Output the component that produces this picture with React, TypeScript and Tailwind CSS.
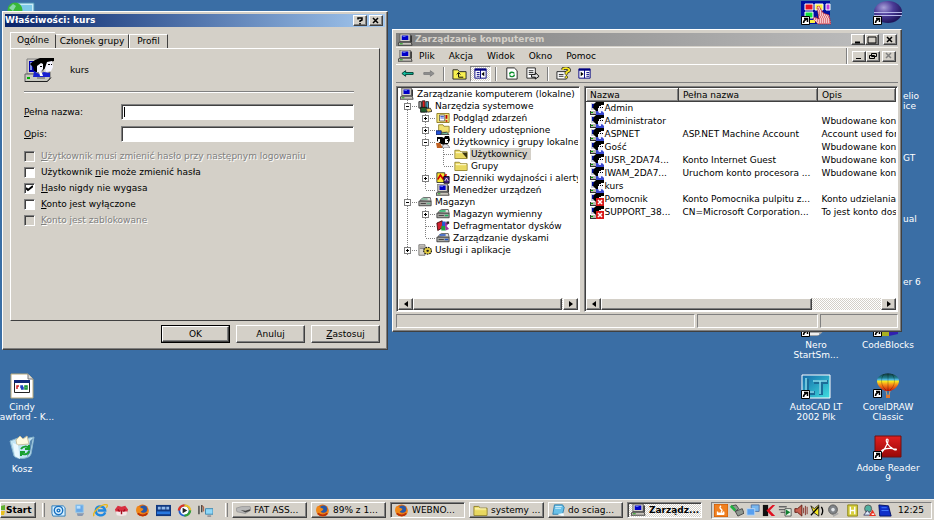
import type { ReactNode } from "react";

const raised =
  "bg-[#d4d0c8] border border-t-white border-l-white border-r-[#404040] border-b-[#404040] shadow-[inset_-1px_-1px_0_#808080]";
const sunken =
  "border border-t-[#808080] border-l-[#808080] border-r-white border-b-white shadow-[inset_1px_1px_0_#404040]";
const thinSunken = "border border-t-[#808080] border-l-[#808080] border-r-white border-b-white";
const dither = "bg-[repeating-conic-gradient(#ffffff_0_25%,#d4d0c8_0_50%)] bg-[length:2px_2px]";

function Svg({ w, h, box, children }: { w: number; h: number; box?: string; children: ReactNode }) {
  return (
    <svg
      width={w}
      height={h}
      viewBox={box ?? `0 0 ${w} ${h}`}
      preserveAspectRatio="none"
      className="block shrink-0"
      aria-hidden="true"
    >
      {children}
    </svg>
  );
}

/* ---------- small icons, all drawn on a 16x16 grid ---------- */

function Computer({ w = 15, h = 12 }: { w?: number; h?: number }) {
  return (
    <Svg w={w} h={h} box="0 0 16 16">
      <path d="M2 0h11v10H2z" fill="#d4d0c8" stroke="#555" />
      <path d="M4 2h7v6H4z" fill="#0000c8" />
      <path d="M5 3h3v1H5z" fill="#7090ff" />
      <path d="M1 11h13l1 4H0z" fill="#c8c4bc" stroke="#333" />
      <path d="M2 13h3" stroke="#00a000" />
      <path d="M14 2v9" stroke="#222" strokeWidth="1.5" />
    </Svg>
  );
}

function User({ blocked }: { blocked?: boolean }) {
  return (
    <Svg w={14} h={13} box="0 0 14 13">
      <path d="M1 1h6v7H1z" fill="#c8c8d8" />
      <path d="M2 2h3v4H2z" fill="#0010a0" />
      <path d="M0 9h9v3H0z" fill="#b8b8b0" />
      <path d="M0 12h10v1H0zM0 9h1v3H0z" fill="#303030" />
      <path d="M1 10h2v1H1z" fill="#00a000" />
      <path d="M4 2l2-2h8v3h-3v3L9 9H6L3 6z" fill="#000" />
      <path d="M9 4h4v4l-2 1H8V6h1z" fill="#f4f4ff" />
      <path d="M10 5h1v1h-1zM12 5h1v1h-1z" fill="#000" />
      <path d="M6 9h2l2 1 2-1 2 2v2H6z" fill="#3848d0" />
      <path d="M8 9h3v2H9z" fill="#e8e8ff" />
      {blocked && (
        <>
          <path d="M6 5h8v8H6z" fill="#d81818" />
          <path d="M8 7l4 4M12 7l-4 4" stroke="#fff" strokeWidth="1.5" />
        </>
      )}
    </Svg>
  );
}

function UserLarge() {
  return (
    <Svg w={30} h={24}>
      <path d="M3 1h16v15H3z" fill="#d4d0c8" stroke="#808080" />
      <path d="M5 3h12v11H5z" fill="#0000b0" />
      <path d="M6 4h2v8H6z" fill="#8090e0" />
      <path d="M1 16h22l3-2v7l-3 3H1z" fill="#c8c8c0" stroke="#606060" />
      <path d="M1 23.500h22l4-4" stroke="#202020" fill="none" />
      <path d="M3 19h3v2H3z" fill="#00b000" />
      <path d="M13 20h8" stroke="#606060" />
      <path d="M6 6l5-4 5-2h14v3l-4 1-2 4-5 4-4 3-5-2-1-4z" fill="#000" />
      <path d="M13 8l4-3 2 1v5l-3 4-3-1z" fill="#f4f4ff" />
      <path d="M23 4l5-1 1 6-2 4-5 1-1-4z" fill="#f4f4ff" />
      <path d="M24 6h2v1h-2zM27 6h1v1h-1zM16 8h2v1h-2z" fill="#000" />
      <path d="M10 13l5 3 5-2 6 1v4H9z" fill="#1820d0" />
      <path d="M15 14l3 1 1 3h-3z" fill="#fff" />
    </Svg>
  );
}

function Folder({ open, w = 14, h = 12 }: { open?: boolean; w?: number; h?: number }) {
  return (
    <Svg w={w} h={h} box="0 0 16 16">
      <path d="M1 3h5l2 2h7v9H1z" fill="#f0e070" stroke="#8a7a20" />
      <path d="M2 6h12" stroke="#fffbd0" />
      <path d="M2 8h12v5H2z" fill="#e8d860" />
      {open && <path d="M9 6h6v8z" fill="#3a3410" />}
    </Svg>
  );
}

function Tools() {
  return (
    <Svg w={14} h={13} box="0 0 16 16">
      <path d="M1 2h3v8H1z" fill="#a0a0a0" stroke="#222" />
      <path d="M5 1h3v9H5z" fill="#e02020" stroke="#222" />
      <path d="M9 2h3v8H9z" fill="#40a0c0" stroke="#222" />
      <path d="M3 9h7v6H3z" fill="#206030" stroke="#111" />
      <path d="M9 11l5-1 2 4-5 1z" fill="#e8c850" stroke="#333" />
    </Svg>
  );
}

function EventLog() {
  return (
    <Svg w={14} h={12} box="0 0 16 16">
      <path d="M1 2h14v12H1z" fill="#f6e878" stroke="#806c10" />
      <path d="M4 4h6v8H4z" fill="#fff" stroke="#555" />
      <path d="M5 6h4M5 8h4" stroke="#2040c0" />
      <path d="M12 4v5M12 11v2" stroke="#c00000" strokeWidth="2" />
    </Svg>
  );
}

function SharedFolder() {
  return (
    <Svg w={14} h={12} box="0 0 16 16">
      <path d="M3 1h5l1 2h6v8H3z" fill="#f0e070" stroke="#8a7a20" />
      <path d="M0 9h6v5H0z" fill="#2050d8" stroke="#102060" />
      <path d="M6 12l6-1 3 3H6z" fill="#70c0a0" stroke="#333" />
    </Svg>
  );
}

function UserGroup() {
  return (
    <Svg w={14} h={12} box="0 0 14 12">
      <path d="M1 1h5l2 1 1-2h4l1 4-2 4-4 1-3-1-4-3z" fill="#000" />
      <path d="M2 3h2v3H2zM9 3h3v4H9z" fill="#f8f8f8" />
      <path d="M11 4h1v1h-1z" fill="#000" />
      <path d="M0 7h4l3 5H1z" fill="#c06020" />
      <path d="M7 9l2-1 3 1 2 3H6z" fill="#e0e0e8" stroke="#333" strokeWidth=".5" />
    </Svg>
  );
}

function PerfLog() {
  return (
    <Svg w={14} h={12} box="0 0 16 16">
      <path d="M1 1h9v13H1z" fill="#f8e830" stroke="#222" />
      <path d="M2 10l3-6 3 5 4-6" stroke="#d00000" strokeWidth="2" fill="none" />
      <path d="M9 6h6v9H9z" fill="#402080" stroke="#000" />
      <path d="M10 12l2-4 2 4" stroke="#fff" fill="none" />
    </Svg>
  );
}

function Drive({ accent }: { accent: string }) {
  return (
    <Svg w={14} h={12} box="0 0 16 16">
      <path d="M2 6l4-4h8l1 5z" fill="#e0e0dc" stroke="#555" />
      <path d="M1 7h14v6H1z" fill="#a8a8a4" stroke="#333" />
      <path d="M3 10h6" stroke="#333" />
      <path d="M10 9h4v2h-4z" fill={accent} />
      <path d="M4 3h7v2H4z" fill={accent} />
    </Svg>
  );
}

function Defrag() {
  return (
    <Svg w={14} h={12} box="0 0 16 16">
      <path d="M1 4l6-3 1 9-6 4z" fill="#d02030" stroke="#300" />
      <path d="M7 2h4v6H7z" fill="#2060d0" />
      <path d="M6 8h5v6H6z" fill="#20a040" />
      <path d="M10 3l5 1-3 4 3 4-4 2z" fill="#a030a0" />
      <path d="M12 2h3v3h-3z" fill="#222" />
    </Svg>
  );
}

function Services() {
  return (
    <Svg w={14} h={12} box="0 0 16 16">
      <path d="M1 1h7v14H1z" fill="#d8d4cc" stroke="#666" />
      <path d="M2 4h5M2 6h5" stroke="#777" />
      <circle cx="11" cy="9" r="4.500" fill="#e8d040" stroke="#222" strokeDasharray="2 1" strokeWidth="1.500" />
      <circle cx="11" cy="9" r="1.500" fill="#222" />
    </Svg>
  );
}

/* ---------- desktop pictures ---------- */

function Shortcut() {
  return (
    <>
      <path d="M.5 16.500h8v8h-8z" fill="#fff" stroke="#000" />
      <path d="M2.500 23c0-2 1-3 3-4M3 18.500h3.500V22" stroke="#000" fill="none" strokeWidth="1.500" />
    </>
  );
}

const NetworkPc = (
  <Svg w={28} h={24}>
    <path d="M10 1h17v17H10z" fill="#c8ecf8" stroke="#4a90b0" />
    <path d="M12 3h13v12H12z" fill="#7cc8e8" />
    <circle cx="8" cy="8" r="7.500" fill="#38b838" />
    <path d="M2 6l4-4 3 2-3 5z" fill="#88d8a8" />
  </Svg>
);

const ColorBlocks = (
  <Svg w={30} h={25}>
    <path d="M0 1h29v23H0z" fill="#0010a0" />
    <path d="M4 4h8v6H4z" fill="#e81020" stroke="#fff" />
    <path d="M14 4h8v6h-8z" fill="#f8f040" stroke="#fff" />
    <path d="M25 4h4v6h-4z" fill="#c040e0" stroke="#fff" />
    <path d="M4 12h8v6H4z" fill="#10e040" stroke="#fff" />
    <path d="M9 20h5v3H9z" fill="#f8f040" />
    <path d="M16 7l2-1 4 7 6 2 2 9H17l-5-5 1-2 5 2z" fill="#f4c8cc" stroke="#c01020" strokeDasharray="1 1" />
    <path
      d="M17 9h3M18 11h3M18 13h5M18 15h9M15 17h13M14 19h15M16 21h13M18 23h11"
      stroke="#c82838"
      strokeDasharray="1 1"
    />
    <Shortcut />
  </Svg>
);

const Eclipse = (
  <Svg w={30} h={25}>
    <defs>
      <radialGradient id="ecl" cx="35%" cy="30%" r="70%">
        <stop offset="0" stopColor="#a8a0d8" />
        <stop offset=".5" stopColor="#4c3c98" />
        <stop offset="1" stopColor="#20165c" />
      </radialGradient>
    </defs>
    <ellipse cx="15" cy="12" rx="14" ry="11" fill="url(#ecl)" />
    <path d="M1 12.500h28M1 15.500h28" stroke="#b8b8e8" />
    <Shortcut />
  </Svg>
);

const Nero = (
  <Svg w={30} h={25}>
    <path d="M6 12h18c0 6-4 11-8 12H6z" fill="#a0a4a8" />
    <path d="M9 22h9" stroke="#eee" strokeWidth="2" />
    <Shortcut />
  </Svg>
);

const CodeBlocks = (
  <Svg w={30} h={25}>
    <path d="M8 10h8v14H8z" fill="#a8b020" />
    <path d="M16 10h9v12l-9 2z" fill="#3020b0" />
    <Shortcut />
  </Svg>
);

const AutoCad = (
  <Svg w={30} h={25}>
    <defs>
      <linearGradient id="acad" x1="0" x2="1" y2="1">
        <stop offset="0" stopColor="#1468a8" />
        <stop offset="1" stopColor="#40e0e0" />
      </linearGradient>
    </defs>
    <path d="M1 1h28v23H1z" fill="url(#acad)" stroke="#fff" />
    <path d="M6 5v14h8M13 8h14M20 8v13" stroke="#1c6c98" strokeWidth="4" fill="none" />
    <path d="M5 4v14h8M12 7h14M19 7v13" stroke="#88e0f0" strokeWidth="1.500" fill="none" />
    <Shortcut />
  </Svg>
);

const Corel = (
  <Svg w={30} h={26}>
    <defs>
      <linearGradient id="balloon" x1="0" x2="0" y2="1">
        <stop offset="0" stopColor="#103838" />
        <stop offset=".25" stopColor="#208090" />
        <stop offset=".35" stopColor="#50b8e0" />
        <stop offset=".45" stopColor="#f8e820" />
        <stop offset=".65" stopColor="#f88818" />
        <stop offset="1" stopColor="#c81808" />
      </linearGradient>
    </defs>
    <path d="M4 8C4-2 26-2 26 8c0 5-5 9-9 10h-4C9 17 4 13 4 8z" fill="url(#balloon)" />
    <path d="M11 1c-4 5-3 12 2 16M15 0v18M19 1c4 5 3 12-2 16" stroke="#00000040" fill="none" />
    <path d="M13 18l1 4M17 18l-1 4" stroke="#d0a070" />
    <path d="M13 22h4v3h-4z" fill="#e07830" />
    <Shortcut />
  </Svg>
);

const Adobe = (
  <Svg w={30} h={25}>
    <defs>
      <linearGradient id="adb" x1="0" x2="0" y2="1">
        <stop offset="0" stopColor="#e02020" />
        <stop offset="1" stopColor="#980808" />
      </linearGradient>
    </defs>
    <path d="M2 1h26v21H2z" fill="url(#adb)" stroke="#701010" />
    <path
      d="M14 4c3 0-1 9-5 13-2-1 2-5 14-3 2 2-5 1-9-6-1-2-1-4 0-4z"
      stroke="#fff"
      strokeWidth="1.200"
      fill="none"
    />
    <Shortcut />
  </Svg>
);

const ScreenSaver = (
  <Svg w={24} h={26}>
    <path d="M1 1h17l5 5v19H1z" fill="#fff" stroke="#b8a878" />
    <path d="M18 1v5h5" fill="#ddd" stroke="#777" />
    <path d="M4.500 7.500h15v12h-15z" fill="#fff" stroke="#222" />
    <path d="M4 7h16v3H4z" fill="#102878" />
    <path d="M9 13H7v3" stroke="#d02020" strokeWidth="1.500" fill="none" />
    <path d="M13 13h-2v1.500h2V16h-2" stroke="#2040c0" strokeWidth="1.500" fill="none" />
    <path d="M15 13h2v3h-2z" stroke="#109030" strokeWidth="1.500" fill="none" />
  </Svg>
);

const Bin = (
  <Svg w={28} h={26}>
    <path d="M2 6l8-3 6 1 10-2-3 17c-1 5-14 6-17 2z" fill="#c0e4f4" stroke="#88b4cc" />
    <path d="M8 5l4-4 3 3 4-3 2 8-12 1z" fill="#fffbe0" stroke="#c8c0a0" />
    <path d="M5 8l2 13 5 3-2-14z" fill="#e8f8ff" />
    <path d="M22 6l3-3-3 15-3 4z" fill="#5888b0" />
    <path
      d="M13 14c2-3 6-3 8-1M21 10v4h-4M21 16c-1 4-6 4-8 2M13 21v-4h4"
      stroke="#18a030"
      strokeWidth="2"
      fill="none"
    />
  </Svg>
);

const desktopIcons = [
  { id: "net", at: "left-[-22px] top-[2px]", art: NetworkPc, label: "" },
  { id: "blocks", at: "left-[773px] top-0", art: ColorBlocks, label: "" },
  { id: "eclipse", at: "left-[845px] top-0", art: Eclipse, label: "" },
  { id: "nero", at: "left-[773px] top-[312px]", art: Nero, label: "Nero\nStartSm..." },
  { id: "cb", at: "left-[845px] top-[312px]", art: CodeBlocks, label: "CodeBlocks" },
  { id: "acad", at: "left-[773px] top-[374px]", art: AutoCad, label: "AutoCAD LT\n2002 Plk" },
  { id: "corel", at: "left-[845px] top-[373px]", art: Corel, label: "CorelDRAW\nClassic" },
  { id: "adobe", at: "left-[845px] top-[435px]", art: Adobe, label: "Adobe Reader\n9" },
  { id: "cindy", at: "left-[-21px] top-[373px]", art: ScreenSaver, label: "Cindy\nCrawford - K..." },
  { id: "bin", at: "left-[-21px] top-[435px]", art: Bin, label: "Kosz" },
];

/* labels of the icons that lie mostly behind the console window */
const hiddenLabels = [
  { at: "top-[91px]", text: "elio\nice" },
  { at: "top-[153px]", text: "GT" },
  { at: "top-[214px]", text: "ual" },
  { at: "top-[277px]", text: "er 6" },
];

/* ---------- properties dialog ---------- */

function CaptionButton({ label, disabled, children }: { label: string; disabled?: boolean; children: ReactNode }) {
  return (
    <button
      type="button"
      aria-label={label}
      disabled={disabled}
      className={`flex h-[11px] w-[14px] items-center justify-center text-black disabled:text-[#808080] ${raised}`}
    >
      <svg width="10" height="8" viewBox="0 0 10 8" fill="none" stroke="currentColor" aria-hidden="true">
        {children}
      </svg>
    </button>
  );
}

const closeGlyph = <path d="M2 1l5 5M7 1L2 6" strokeWidth="1.500" />;

function Check({
  hot,
  before = "",
  after,
  checked,
  disabled,
}: {
  hot: string;
  before?: string;
  after: string;
  checked?: boolean;
  disabled?: boolean;
}) {
  return (
    <label className="flex h-4 items-center gap-[6px]">
      <span className="relative flex">
        <input
          type="checkbox"
          defaultChecked={checked}
          disabled={disabled}
          className={`peer h-[11px] w-[11px] appearance-none bg-white disabled:bg-[#d4d0c8] ${sunken}`}
        />
        <svg
          className="pointer-events-none absolute left-[2px] top-[2px] hidden peer-checked:block"
          width="7"
          height="7"
          viewBox="0 0 7 7"
          aria-hidden="true"
        >
          <path d="M0 3l2 2 5-4" fill="none" stroke="#000" strokeWidth="2" />
        </svg>
      </span>
      <span className={disabled ? "text-[#808080] [text-shadow:1px_1px_0_#ffffff]" : ""}>
        {before}
        <u>{hot}</u>
        {after}
      </span>
    </label>
  );
}

function PropertiesDialog() {
  return (
    <section className={`absolute left-[2px] top-[11px] w-[386px] p-[2px] ${raised}`}>
      <header className="flex h-[13px] items-center justify-between bg-linear-to-r from-[#0a246a] to-[#a6caf0] pr-[2px]">
        <h1 className="font-bold text-white">Właściwości: kurs</h1>
        <div className="flex gap-[2px]">
          <CaptionButton label="Pomoc">
            <path d="M3 2.500V1h4v2L5 4v1M5 6v1.500" strokeWidth="1.500" />
          </CaptionButton>
          <CaptionButton label="Zamknij">{closeGlyph}</CaptionButton>
        </div>
      </header>
      <form className="px-[5px] pt-[5px] pb-[4px]">
        <div role="tablist" className="flex h-4 items-end">
          <button type="button" role="tab" aria-selected="true" className="h-4 w-[45px] border-l border-t border-white">
            O<u>g</u>ólne
          </button>
          <button
            type="button"
            role="tab"
            className="h-[14px] w-[74px] whitespace-nowrap border border-b-0 border-t-white border-r-[#404040] border-l-[#404040]"
          >
            Członek grupy
          </button>
          <button
            type="button"
            role="tab"
            className="h-[14px] w-[39px] border border-b-0 border-l-white border-t-white border-r-[#404040]"
          >
            Profil
          </button>
        </div>
        <div className="min-h-[273px] border border-b-[#404040] border-l-white border-r-[#404040] border-t-white pl-[13px] pr-[25px] pt-[9px]">
          <div className="flex items-center gap-4">
            <UserLarge />
            <span>kurs</span>
          </div>
          <hr className="mt-[9px] h-[2px] border-b border-t border-b-white border-t-[#808080]" />
          <div className="mt-[11px] flex items-center">
            <label htmlFor="full" className="w-[97px]">
              <u>P</u>ełna nazwa:
            </label>
            <div className="relative flex flex-1">
              <input id="full" className={`h-4 w-full bg-white px-1 outline-none ${sunken}`} />
              <span className="absolute left-[3px] top-[3px] h-[10px] w-px bg-black" />
            </div>
          </div>
          <div className="mt-[6px] mb-[6px] flex items-center">
            <label htmlFor="desc" className="w-[97px]">
              <u>O</u>pis:
            </label>
            <input id="desc" className={`h-4 flex-1 bg-white px-1 outline-none ${sunken}`} />
          </div>
          <Check hot="U" after="żytkownik musi zmienić hasło przy następnym logowaniu" disabled />
          <Check before="Użytkownik " hot="n" after="ie może zmienić hasła" />
          <Check hot="H" after="asło nigdy nie wygasa" checked />
          <Check hot="K" after="onto jest wyłączone" />
          <Check hot="K" after="onto jest zablokowane" disabled />
        </div>
        <div className="mt-1 flex justify-end gap-[6px]">
          <button type="button" className="h-[18px] w-[69px] border border-black">
            <span className={`flex h-full items-center justify-center ${raised}`}>OK</span>
          </button>
          <button type="button" className={`h-[18px] w-[69px] ${raised}`}>
            Anuluj
          </button>
          <button type="button" className={`h-[18px] w-[69px] ${raised}`}>
            <u>Z</u>astosuj
          </button>
        </div>
      </form>
    </section>
  );
}

/* ---------- management console ---------- */

/* guides: "|" line, "t" branch, "L" last branch, "+"/"-" boxed branch, " " empty */
const tree: { guides: string; icon: ReactNode; text: string; selected?: boolean }[] = [
  { guides: "", icon: <Computer w={14} />, text: "Zarządzanie komputerem (lokalne)" },
  { guides: "-", icon: <Tools />, text: "Narzędzia systemowe" },
  { guides: "|+", icon: <EventLog />, text: "Podgląd zdarzeń" },
  { guides: "|+", icon: <SharedFolder />, text: "Foldery udostępnione" },
  { guides: "|-", icon: <UserGroup />, text: "Użytkownicy i grupy lokalne" },
  { guides: "||t", icon: <Folder open />, text: "Użytkownicy", selected: true },
  { guides: "||L", icon: <Folder />, text: "Grupy" },
  { guides: "|+", icon: <PerfLog />, text: "Dzienniki wydajności i alerty" },
  { guides: "|L", icon: <Computer w={14} />, text: "Menedżer urządzeń" },
  { guides: "-", icon: <Drive accent="#70b090" />, text: "Magazyn" },
  { guides: "|+", icon: <Drive accent="#20b060" />, text: "Magazyn wymienny" },
  { guides: "|t", icon: <Defrag />, text: "Defragmentator dysków" },
  { guides: "|L", icon: <Drive accent="#2050c0" />, text: "Zarządzanie dyskami" },
  { guides: "+", icon: <Services />, text: "Usługi i aplikacje" },
];

function Guide({ kind }: { kind: string }) {
  const boxed = kind === "+" || kind === "-";
  return (
    <svg width="18" height="12" viewBox="0 0 18 12" className="shrink-0" shapeRendering="crispEdges" aria-hidden="true">
      <g stroke="#808080" strokeDasharray="1 1" fill="none">
        {kind !== " " && <path d={kind === "L" ? "M7.500 0v6" : "M7.500 0v12"} />}
        {kind !== " " && kind !== "|" && <path d="M8 6.500h10" />}
      </g>
      {boxed && (
        <>
          <path d="M4.500 3.500h6v6h-6z" fill="#fff" stroke="#808080" />
          <path d={kind === "+" ? "M6 6.500h3M7.500 5v3" : "M6 6.500h3"} stroke="#000" />
        </>
      )}
    </svg>
  );
}

const users = [
  { name: "Admin", full: "", desc: "" },
  { name: "Administrator", full: "", desc: "Wbudowane kont" },
  { name: "ASPNET", full: "ASP.NET Machine Account", desc: "Account used for" },
  { name: "Gość", full: "", desc: "Wbudowane kont" },
  { name: "IUSR_2DA74...", full: "Konto Internet Guest", desc: "Wbudowane kont" },
  { name: "IWAM_2DA7...", full: "Uruchom konto procesora ...", desc: "Wbudowane kont" },
  { name: "kurs", full: "", desc: "" },
  { name: "Pomocnik", full: "Konto Pomocnika pulpitu z...", desc: "Konto udzielania", blocked: true },
  { name: "SUPPORT_38...", full: "CN=Microsoft Corporation...", desc: "To jest konto dos", blocked: true },
];

function ScrollBar({ thumb }: { thumb: string }) {
  return (
    <div className={`flex h-3 ${dither}`}>
      <button type="button" aria-label="W lewo" className={`flex w-[15px] items-center justify-center ${raised}`}>
        <Svg w={4} h={6}>
          <path d="M4 0v6L0 3z" />
        </Svg>
      </button>
      <div className={`${thumb} ${raised}`} />
      <button
        type="button"
        aria-label="W prawo"
        className={`ml-auto flex w-[15px] items-center justify-center ${raised}`}
      >
        <Svg w={4} h={6}>
          <path d="M0 0v6l4-3z" />
        </Svg>
      </button>
    </div>
  );
}

function ToolButton({ label, pressed, children }: { label: string; pressed?: boolean; children: ReactNode }) {
  return (
    <button
      type="button"
      aria-label={label}
      className={`flex h-4 w-[21px] items-center justify-center ${pressed ? `${thinSunken} ${dither}` : ""}`}
    >
      <Svg w={15} h={13} box="0 0 16 14">
        {children}
      </Svg>
    </button>
  );
}

const ToolSep = () => <span className="mx-1 h-[14px] w-[2px] border-l border-r border-l-[#808080] border-r-white" />;

function Toolbar() {
  return (
    <div role="toolbar" className="flex h-[18px] items-center border-b border-b-[#808080] pl-px">
      <ToolButton label="Wstecz">
        <path d="M2 7l4-3v2h8v2H6v2z" fill="#10c0a0" stroke="#003c30" />
      </ToolButton>
      <ToolButton label="Dalej">
        <path d="M14 7l-4-3v2H3v2h7v2z" fill="#909090" stroke="#808080" />
      </ToolButton>
      <ToolSep />
      <ToolButton label="W górę">
        <path d="M1 3h5l2 2h7v8H1z" fill="#f8f050" stroke="#222" />
        <path d="M5 8l2-2 2 2M7 6v5h5" stroke="#000" fill="none" />
      </ToolButton>
      <ToolButton label="Pokaż drzewo" pressed>
        <path d="M2 2h12v10H2z" fill="#fff" stroke="#000080" />
        <path d="M2 3h12" stroke="#000080" strokeWidth="2" />
        <path d="M8 3v9M4 6h3M4 8h3M4 10h3" stroke="#000080" />
        <path d="M12 5v5l-3-2.500z" fill="#000" />
      </ToolButton>
      <ToolSep />
      <ToolButton label="Odśwież">
        <path d="M3 1h8l3 3v9H3z" fill="#fff" stroke="#222" />
        <path d="M6 8c0-3 4-3 5-1M11 8c0 3-4 3-5 1" stroke="#109030" strokeWidth="1.500" fill="none" />
      </ToolButton>
      <ToolButton label="Eksportuj listę">
        <path d="M2 1h9v11H2z" fill="#fff" stroke="#222" />
        <path d="M4 4h5M4 6h5M4 8h3" stroke="#222" />
        <path d="M7 8h4V6l4 4-4 3v-2H7z" fill="#e0e0e0" stroke="#000" />
      </ToolButton>
      <ToolSep />
      <ToolButton label="Pomoc">
        <path d="M1 5h10v8H1z" fill="#fff" stroke="#222" />
        <path d="M3 8h5M3 10h5" stroke="#222" />
        <path d="M7 3c1-3 8-2 7 1l-3 2v2M11 10v2" stroke="#222" strokeWidth="3.500" fill="none" />
        <path d="M7 3c1-3 8-2 7 1l-3 2v2M11 10v2" stroke="#f8e820" strokeWidth="2" fill="none" />
      </ToolButton>
      <ToolButton label="Panel akcji">
        <path d="M2 2h12v10H2z" fill="#fff" stroke="#000080" />
        <path d="M2 3h12" stroke="#000080" strokeWidth="2" />
        <path d="M8 3v9M10 6h3M10 8h3M10 10h3" stroke="#000080" />
        <path d="M4 5v5l3-2.500z" fill="#000" />
      </ToolButton>
    </div>
  );
}

function Console() {
  return (
    <section className={`absolute left-[392px] top-[29px] w-[510px] p-[3px] ${raised}`}>
      <header className="flex h-[13px] items-center justify-between bg-linear-to-r from-[#808080] to-[#c0c0c0] pl-[2px] pr-px">
        <div className="flex items-center gap-[2px]">
          <Computer />
          <h1 className="font-bold text-[#d4d0c8]">Zarządzanie komputerem</h1>
        </div>
        <div className="flex">
          <CaptionButton label="Minimalizuj">
            <path d="M2 6.500h5" strokeWidth="2" />
          </CaptionButton>
          <CaptionButton label="Maksymalizuj">
            <path d="M1 1h8v6H1z" />
          </CaptionButton>
          <span className="w-1" />
          <CaptionButton label="Zamknij">{closeGlyph}</CaptionButton>
        </div>
      </header>
      <div className="mt-px flex h-[18px] items-stretch border-b border-t border-b-white border-t-[#f4f2ee]">
        <nav className="flex flex-1 items-center gap-[6px] border-r border-r-[#808080] pl-[2px]">
          <Computer />
          <div className="flex gap-[14px]">
            <button type="button">Plik</button>
            <button type="button">Akcja</button>
            <button type="button">Widok</button>
            <button type="button">Okno</button>
            <button type="button">Pomoc</button>
          </div>
        </nav>
        <div className="flex items-center border-l border-l-white pl-1 pr-[2px]">
          <CaptionButton label="Minimalizuj okno">
            <path d="M2 6.500h5" />
          </CaptionButton>
          <CaptionButton label="Przywróć okno">
            <path d="M3.500 1.500h5v3h-5zM1.500 3.500h5v3h-5z" />
          </CaptionButton>
          <span className="w-[2px]" />
          <CaptionButton label="Zamknij okno" disabled>
            {closeGlyph}
          </CaptionButton>
        </div>
      </div>
      <Toolbar />
      <div className="mt-[3px] flex h-[226px] gap-1">
        <div className={`flex w-[184px] flex-col bg-white p-px ${sunken}`}>
          <ul role="tree" className="flex-1 overflow-hidden">
            {tree.map((node) => (
              <li key={node.text} role="treeitem" className="flex h-3 items-center whitespace-nowrap pl-[2px]">
                {[...node.guides].map((kind, i) => (
                  <Guide key={i} kind={kind} />
                ))}
                {node.icon}
                <span className={`ml-[2px] px-px leading-[12px] ${node.selected ? "bg-[#d4d0c8] pr-1" : ""}`}>
                  {node.text}
                </span>
              </li>
            ))}
          </ul>
          <ScrollBar thumb="w-[149px]" />
        </div>
        <div className={`flex min-w-0 flex-1 flex-col bg-white p-px ${sunken}`}>
          <div className="flex-1 overflow-hidden">
            <table className="w-full table-fixed border-collapse">
              <thead>
                <tr className="h-[13px] text-left leading-[11px]">
                  <th className={`w-[92px] pl-[3px] font-normal ${raised}`}>Nazwa</th>
                  <th className={`w-[139px] pl-1 font-normal ${raised}`}>Pełna nazwa</th>
                  <th className={`pl-1 font-normal ${raised}`}>Opis</th>
                </tr>
              </thead>
              <tbody>
                {users.map((user) => (
                  <tr key={user.name} className="h-[13px] whitespace-nowrap leading-[13px]">
                    <td className="pl-[3px]">
                      <span className="flex items-center gap-px">
                        <User blocked={user.blocked} />
                        {user.name}
                      </span>
                    </td>
                    <td className="pl-1">{user.full}</td>
                    <td className="overflow-hidden pl-1">{user.desc}</td>
                  </tr>
                ))}
              </tbody>
            </table>
          </div>
          <ScrollBar thumb="w-[211px]" />
        </div>
      </div>
      <footer className="mt-[2px] flex h-[14px] gap-[2px]">
        <div className={`flex-1 ${thinSunken}`} />
        <div className={`w-[121px] ${thinSunken}`} />
        <div className={`w-[78px] ${thinSunken}`} />
      </footer>
    </section>
  );
}

/* ---------- taskbar ---------- */

function Firefox() {
  return (
    <Svg w={15} h={13} box="0 0 16 14">
      <circle cx="8" cy="7" r="6.500" fill="#e87010" />
      <circle cx="9" cy="5.500" r="4" fill="#2858a8" />
      <path d="M2 3c3-1 4 2 7 2-1 3-3 2-3 4 3 3 7 1 8-3 2 5-3 8-7 7C3 13 0 8 2 3z" fill="#f08818" />
      <path d="M3 10c3 3 8 3 10 0" stroke="#b83008" strokeWidth="2" fill="none" />
    </Svg>
  );
}

const quickLaunch: { label: string; icon: ReactNode }[] = [
  {
    label: "Outlook Express",
    icon: (
      <Svg w={15} h={13} box="0 0 16 14">
        <path d="M1 2h12l2 2v9H2L1 10z" fill="#d8f0ff" stroke="#2878b8" />
        <circle cx="8" cy="7" r="4.500" fill="none" stroke="#1870c0" strokeWidth="1.500" />
        <circle cx="8" cy="7" r="1.500" fill="none" stroke="#1870c0" strokeWidth="1.500" />
      </Svg>
    ),
  },
  {
    label: "Messenger",
    icon: (
      <Svg w={15} h={13} box="0 0 16 14">
        <path d="M4 1h8v8H4z" fill="#68a8e8" stroke="#98c8e8" />
        <path d="M5 2h4v3H5z" fill="#b8e0ff" />
        <path d="M5 10h8l-2 3H6z" fill="#8898b0" />
      </Svg>
    ),
  },
  {
    label: "Internet Explorer",
    icon: (
      <Svg w={15} h={13} box="0 0 16 14">
        <path d="M13 9c-2 5-10 4-10-2s9-6 10 0H5" fill="none" stroke="#2088e0" strokeWidth="2.500" />
        <path d="M1 13C-1 9 9-1 15 1c1 1 0 2-1 3" fill="none" stroke="#e8b820" strokeWidth="1.500" />
      </Svg>
    ),
  },
  {
    label: "IrfanView",
    icon: (
      <Svg w={15} h={13} box="0 0 16 14">
        <path d="M1 6l3-4 4 1 4-1 3 4-1 3H2z" fill="#d83040" />
        <path d="M2 8h12l-1 4-5 1-5-1z" fill="#f4e8e8" />
        <path d="M4 6l2 2M12 6l-2 2M8 7v4" stroke="#a01020" strokeWidth="1.500" />
      </Svg>
    ),
  },
  { label: "Firefox", icon: <Firefox /> },
  {
    label: "Total Commander",
    icon: (
      <Svg w={15} h={13} box="0 0 16 14">
        <path d="M0 1h16v12H0z" fill="#103880" />
        <path d="M2 3h3v3H2zM6 3h4v3H6zM11 3h3v3h-3z" fill="#90b8e8" />
        <path d="M1 8h14v3H1z" fill="#2878e0" />
      </Svg>
    ),
  },
  {
    label: "Media Player",
    icon: (
      <Svg w={15} h={13} box="0 0 16 14">
        <circle cx="8" cy="7" r="5.500" fill="#fff" stroke="#2060d0" strokeWidth="2" />
        <path d="M2 7a6 6 0 0 1 6-5.500" stroke="#e03020" strokeWidth="2.500" fill="none" />
        <path d="M8 1.500A6 6 0 0 1 14 7" stroke="#f0c020" strokeWidth="2.500" fill="none" />
        <path d="M14 7a6 6 0 0 1-6 5.500" stroke="#30a030" strokeWidth="2.500" fill="none" />
        <path d="M6 4v6l5-3z" fill="#222" />
      </Svg>
    ),
  },
  {
    label: "Pulpit",
    icon: (
      <Svg w={15} h={13} box="0 0 16 14">
        <path d="M1 2v9M4 1v8" stroke="#444" strokeWidth="1.500" />
        <path d="M4 2l2 1v5" stroke="#a05030" fill="none" />
        <path d="M8 5h8v6H8z" fill="#90d8f8" stroke="#4088b0" />
        <path d="M10 13h4" stroke="#667" />
      </Svg>
    ),
  },
];

const tasks: { text: string; icon: ReactNode; pressed?: boolean; active?: boolean }[] = [
  {
    text: "FAT ASS...",
    icon: (
      <Svg w={15} h={12} box="0 0 16 14">
        <path d="M0 5l6-2h9l1 4-6 4-9-2z" fill="#b8b8b8" stroke="#999" />
        <path d="M5 7l5 1 5-2v2l-5 2z" fill="#444" />
      </Svg>
    ),
  },
  { text: "89% z 1...", icon: <Firefox /> },
  { text: "WEBNO...", icon: <Firefox />, pressed: true },
  { text: "systemy ...", icon: <Folder w={15} h={13} /> },
  {
    text: "do sciag...",
    icon: (
      <Svg w={13} h={12} box="0 0 16 14">
        <path d="M3 1h10l2 3-2 8H1z" fill="#68c0e8" stroke="#2878a8" />
        <path d="M4 3h8M4 5h7M8 12l6-1v3z" stroke="#e8f8ff" fill="#fff" />
      </Svg>
    ),
  },
  { text: "Zarządz...", icon: <Computer />, active: true },
];

const tray: { label: string; gap?: boolean; art: ReactNode }[] = [
  {
    label: "Java",
    art: (
      <>
        <path d="M0 0h16v14H0z" fill="#f08020" stroke="#c05000" />
        <path d="M4 10h8M8 2c-4 4 4 3 0 7M4 8v3h7V8" stroke="#fff" strokeWidth="1.500" fill="none" />
      </>
    ),
  },
  {
    label: "Bezpieczne usuwanie",
    art: (
      <>
        <path d="M2 2l5-1 3 4-4 3zM6 8l8-3 2 5-7 3z" fill="#909890" stroke="#444" />
        <path d="M1 2l5 5" stroke="#20b040" strokeWidth="3" />
      </>
    ),
  },
  {
    label: "Sieć",
    art: (
      <>
        <path d="M6 1h9v7H6z" fill="#78b8f0" stroke="#5070a0" />
        <path d="M1 5h9v7H1z" fill="#58a0f0" stroke="#c0d8f0" />
      </>
    ),
  },
  {
    label: "Antywirus",
    art: (
      <>
        <path d="M1 1h6v12H1z" fill="#111" />
        <path d="M5 7l7-6h3L9 7l6 6h-4z" fill="#e01020" />
      </>
    ),
  },
  {
    label: "Zadania",
    art: (
      <>
        <path d="M1 3h9M1 6h9M3 9h6" stroke="#666" strokeWidth="1.500" />
        <path d="M8 5h7v8H8z" fill="#e8f8e8" stroke="#555" />
        <path d="M9 6v6l5-3z" fill="#108030" />
      </>
    ),
  },
  {
    label: "Głośność",
    art: (
      <>
        <path d="M1 5h3l5-4v12L4 9H1z" fill="#c86050" stroke="#601810" />
        <path d="M11 4v6M13 2v10M15 3v8" stroke="#802820" />
      </>
    ),
  },
  {
    label: "Dźwięk",
    art: (
      <>
        <path d="M1 2l4 3 5-4v12L4 9z" fill="#f8e820" stroke="#222" />
        <path d="M1 12l9-9M13 3c2 3 2 6 0 9" stroke="#000" strokeWidth="1.500" fill="none" />
      </>
    ),
  },
  {
    label: "Głośnik",
    art: (
      <>
        <circle cx="8" cy="6" r="5" fill="#808488" stroke="#555" />
        <circle cx="8" cy="6" r="2" fill="#e0e4e8" />
        <path d="M8 13l6-3" stroke="#aaa" strokeWidth="2" />
      </>
    ),
  },
  {
    label: "Hamachi",
    gap: true,
    art: (
      <>
        <path d="M2 1h11v12H2z" fill="#d8d040" stroke="#888010" />
        <path d="M5 3v8M10 3v8M5 7h5" stroke="#fff" strokeWidth="1.500" />
      </>
    ),
  },
  {
    label: "Komunikator",
    art: (
      <>
        <circle cx="7" cy="5" r="4" fill="#50b0a0" stroke="#555" />
        <path d="M2 12l4-5 5 5z" fill="#d8e8f8" stroke="#446" />
        <path d="M8 13l4-7 4 7z" fill="#e83020" />
        <path d="M11 11h3" stroke="#fff" strokeWidth="1.500" />
      </>
    ),
  },
  {
    label: "Monitor",
    art: (
      <>
        <path d="M1 1l11 1 3 11H2z" fill="#1030c8" stroke="#001060" />
        <path d="M4 4h6M4 7h8" stroke="#4880ff" />
      </>
    ),
  },
];

function TaskSep() {
  return <span className="h-[14px] w-[3px] border-l border-r border-l-white border-r-[#808080] bg-[#d4d0c8]" />;
}

function taskStyle(task: { pressed?: boolean; active?: boolean }) {
  if (task.active) return `font-bold ${sunken} ${dither}`;
  return task.pressed ? sunken : raised;
}

function Taskbar() {
  return (
    <footer className="flex h-[21px] shrink-0 items-center border-t border-t-[#f4f2ee] bg-[#d4d0c8]">
      <button type="button" className={`flex h-4 w-9 items-center gap-px overflow-hidden font-bold ${raised}`}>
        <Svg w={4} h={11}>
          <path d="M0 1l4-1v5H0z" fill="#60b030" />
          <path d="M0 6h4l-1 4H0z" fill="#e8c020" />
        </Svg>
        Start
      </button>
      <div className="ml-[6px] flex items-center gap-[6px]">
        <TaskSep />
        {quickLaunch.map((item) => (
          <button key={item.label} type="button" aria-label={item.label}>
            {item.icon}
          </button>
        ))}
      </div>
      <div className="ml-3 flex items-center gap-1">
        <TaskSep />
        {tasks.map((task) => (
          <button
            key={task.text}
            type="button"
            className={`flex h-4 w-[75px] items-center gap-[3px] whitespace-nowrap pl-[3px] ${taskStyle(task)}`}
          >
            {task.icon}
            {task.text}
          </button>
        ))}
      </div>
      <div className={`ml-auto mr-[2px] flex h-[17px] items-center gap-[2px] pl-[2px] pr-[7px] ${thinSunken}`}>
        {tray.map((item) => (
          <button key={item.label} type="button" aria-label={item.label} className={item.gap ? "ml-1" : ""}>
            <Svg w={14} h={13} box="0 0 16 14">
              {item.art}
            </Svg>
          </button>
        ))}
        <time className="ml-1">12:25</time>
      </div>
    </footer>
  );
}

export default function App() {
  return (
    <div className="flex h-screen flex-col overflow-hidden border-b border-r-2 border-white bg-[#3a6ea5] font-['DejaVu_Sans',sans-serif] text-[9px] leading-[11px] text-black">
      <main className="relative flex-1 overflow-hidden">
        {desktopIcons.map((icon) => (
          <a
            key={icon.id}
            href="#"
            className={`absolute flex w-[86px] flex-col items-center whitespace-pre text-center leading-[10px] text-white ${icon.at}`}
          >
            {icon.art}
            <span className="mt-[3px]">{icon.label}</span>
          </a>
        ))}
        {hiddenLabels.map((item) => (
          <a
            key={item.text}
            href="#"
            className={`absolute left-[903px] whitespace-pre leading-[10px] text-white ${item.at}`}
          >
            {item.text}
          </a>
        ))}
        <Console />
        <PropertiesDialog />
      </main>
      <Taskbar />
    </div>
  );
}
